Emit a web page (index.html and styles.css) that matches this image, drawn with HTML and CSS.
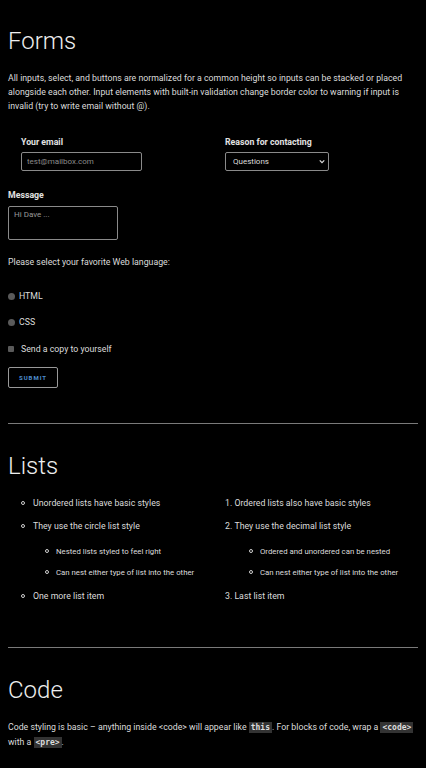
FILE: index.html
```html
<!DOCTYPE html>
<html>
<head>
<meta charset="utf-8">
<link rel="stylesheet" href="styles.css">
</head>
<body>
<main class="page">
  <section class="section">
    <h2 class="title">Forms</h2>
    <p class="text">All inputs, select, and buttons are normalized for a common height so inputs can be stacked or placed alongside each other. Input elements with built-in validation change border color to warning if input is invalid (try to write email without @).</p>
    <form class="form">
      <div class="row">
        <div class="col">
          <label class="label">Your email</label>
          <input class="field email" type="email" placeholder="test@mailbox.com">
        </div>
        <div class="col">
          <label class="label">Reason for contacting</label>
          <div class="select">
            <span>Questions</span>
            <svg class="chev" viewBox="0 0 8 6" width="6" height="5"><path d="M1 1.5 L4 4.5 L7 1.5" fill="none" stroke="#ddd" stroke-width="1.6"/></svg>
          </div>
        </div>
      </div>
      <label class="label msg-label">Message</label>
      <div class="textarea"><span>Hi Dave ...</span></div>
      <p class="text ask">Please select your favorite Web language:</p>
      <div class="choice radio-row"><span class="radio"></span><span>HTML</span></div>
      <div class="choice radio-row"><span class="radio"></span><span>CSS</span></div>
      <div class="choice check-row"><span class="check"></span><span>Send a copy to yourself</span></div>
      <button class="submit" type="button">SUBMIT</button>
    </form>
  </section>
  <hr class="rule">
  <section class="section">
    <h2 class="title">Lists</h2>
    <div class="row lists">
      <div class="col">
        <ul class="ul">
          <li>Unordered lists have basic styles</li>
          <li>They use the circle list style
            <ul class="nested">
              <li>Nested lists styled to feel right</li>
              <li>Can nest either type of list into the other</li>
            </ul>
          </li>
          <li>One more list item</li>
        </ul>
      </div>
      <div class="col">
        <ol class="ol">
          <li>Ordered lists also have basic styles</li>
          <li>They use the decimal list style
            <ul class="nested nested-ol">
              <li>Ordered and unordered can be nested</li>
              <li>Can nest either type of list into the other</li>
            </ul>
          </li>
          <li>Last list item</li>
        </ol>
      </div>
    </div>
  </section>
  <hr class="rule rule2">
  <section class="section">
    <h2 class="title">Code</h2>
    <p class="text">Code styling is basic – anything inside &lt;code&gt; will appear like <code class="code">this</code>. For blocks of code, wrap a <code class="code">&lt;code&gt;</code> with a <code class="code">&lt;pre&gt;</code>.</p>
  </section>
</main>
</body>
</html>
```

FILE: styles.css
```css
html, body {
  margin: 0;
  padding: 0;
  background: #000;
}
body {
  font-family: Roboto, "Liberation Sans", sans-serif;
  color: #dcdcdc;
  font-size: 8.75px;
}
.page {
  padding: 0 8px;
}
.title {
  font-weight: 300;
  font-size: 24px;
  line-height: 28px;
  margin: 27px 0 16px;
  color: #eee;
}
.text {
  margin: 0;
  line-height: 14px;
}
.form {
  margin-top: 22px;
}
.row {
  display: grid;
  grid-template-columns: 1fr 1fr;
}
.col {
  padding: 0 12px 0 13px;
}
.col + .col {
  padding-left: 12px;
}
.label {
  display: block;
  font-weight: 700;
  line-height: 14px;
  color: #e2e2e2;
}
.field, .select, .textarea {
  box-sizing: border-box;
  background: #000;
  border: 1px solid #8a8a8a;
  border-radius: 2px;
  color: #999;
  font-family: Roboto, "Liberation Sans", sans-serif;
  font-size: 8px;
}
.field {
  display: block;
  margin-top: 3px;
  width: 121px;
  height: 19px;
  padding: 0 5px;
  outline: none;
}
.field::placeholder {
  color: #8a8a8a;
}
.select {
  margin-top: 3px;
  width: 104px;
  height: 19px;
  display: flex;
  align-items: center;
  justify-content: space-between;
  padding: 0 3px 0 7px;
  color: #ddd;
}
.msg-label {
  margin-top: 17px;
}
.textarea {
  margin-top: 4px;
  width: 110px;
  height: 34px;
  padding: 3px 5px;
  line-height: 10px;
  color: #999;
}
.ask {
  margin-top: 15px;
}
.choice {
  display: flex;
  align-items: center;
  line-height: 14px;
}
.radio-row {
  margin-top: 20px;
  gap: 4px;
}
.radio-row + .radio-row {
  margin-top: 12px;
}
.check-row {
  margin-top: 13px;
  gap: 7px;
}
.radio {
  width: 7px;
  height: 7px;
  border-radius: 50%;
  background: #5a5a5a;
}
.check {
  width: 6px;
  height: 6px;
  border-radius: 1px;
  background: #5a5a5a;
}
.submit {
  display: block;
  margin-top: 11px;
  width: 50px;
  height: 21px;
  background: #000;
  border: 1px solid #999;
  border-radius: 2px;
  color: #4f8fd0;
  font-family: Roboto, "Liberation Sans", sans-serif;
  font-weight: 700;
  font-size: 6px;
  letter-spacing: 1px;
  padding: 0;
}
.rule {
  border: 0;
  border-top: 1px solid #7a7a7a;
  margin: 35px 0 0;
}
.rule + .section .title {
  margin-top: 28px;
}
.lists .col {
  padding: 0 12px 0 0;
}
.lists .col + .col {
  padding-left: 12px;
}
.ul, .ol {
  margin: 0;
  line-height: 14px;
}
.ul {
  padding-left: 25px;
  list-style: none;
}
.ol {
  padding-left: 0;
  list-style: decimal inside;
}
.ul > li, .ol > li {
  margin-bottom: 9px;
}
.ul li::before, .nested li::before {
  content: "";
  display: inline-block;
  box-sizing: border-box;
  width: 4px;
  height: 4px;
  border: 1px solid #cfcfcf;
  border-radius: 50%;
  margin-left: -12px;
  margin-right: 8px;
  vertical-align: 1px;
}
.nested li::before {
  margin-left: -11px;
  margin-right: 7px;
}
.nested {
  list-style: none;
  font-size: 7.8px;
  padding-left: 23px;
  margin: 12px 0 0;
}
.nested-ol {
  padding-left: 35px;
}
.nested li {
  margin-bottom: 7px;
  line-height: 14px;
}
.rule2 {
  margin-top: 35px;
}
.rule2 + .section .title {
  margin-top: 28px;
}
.code {
  font-family: "DejaVu Sans Mono", monospace;
  font-weight: 700;
  font-size: 8px;
  background: #333;
  color: #ddd;
  padding: 1px 2px;
}
```
